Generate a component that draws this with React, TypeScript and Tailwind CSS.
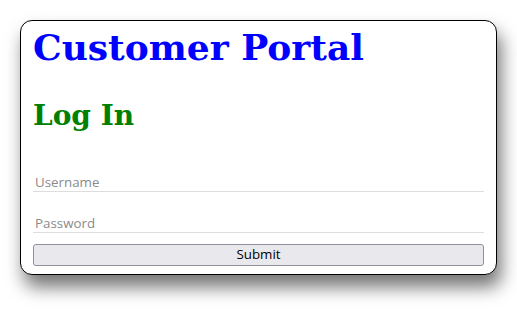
import React from 'react';

const App: React.FC = () => {
  return (
    <div className="p-5 bg-white min-h-screen">
      <div className="rounded-xl border border-black bg-white px-3 pt-[5px] pb-[8px] shadow-[4px_12px_18px_rgba(0,0,0,0.55)]">
        <h1 className="font-['DejaVu_Serif',serif] text-[36px] leading-[42px] font-bold text-[#0000ff]">
          Customer Portal
        </h1>
        <h2 className="mt-8 font-['DejaVu_Serif',serif] text-[28px] leading-[31px] font-bold text-[#008000]">
          Log In
        </h2>

        <form className="mt-[41px] flex flex-col" onSubmit={(e) => e.preventDefault()}>
          <input
            type="text"
            placeholder="Username"
            className="block h-5 w-full border-b border-[#dddddd] px-[2px] font-['Open_Sans',sans-serif] text-[13.33px] text-black outline-none placeholder:text-[#8a8a8a]"
          />
          <input
            type="password"
            placeholder="Password"
            className="mt-[21px] block h-5 w-full border-b border-[#dddddd] px-[2px] font-['Open_Sans',sans-serif] text-[13.33px] text-black outline-none placeholder:text-[#8a8a8a]"
          />
          <button
            type="submit"
            className="mt-[11px] h-[22px] w-full rounded-[3px] border border-[#8f8f9d] bg-[#e9e9ed] font-['Open_Sans',sans-serif] text-[13.33px] leading-none text-black"
          >
            Submit
          </button>
        </form>
      </div>
    </div>
  );
};

export default App;
